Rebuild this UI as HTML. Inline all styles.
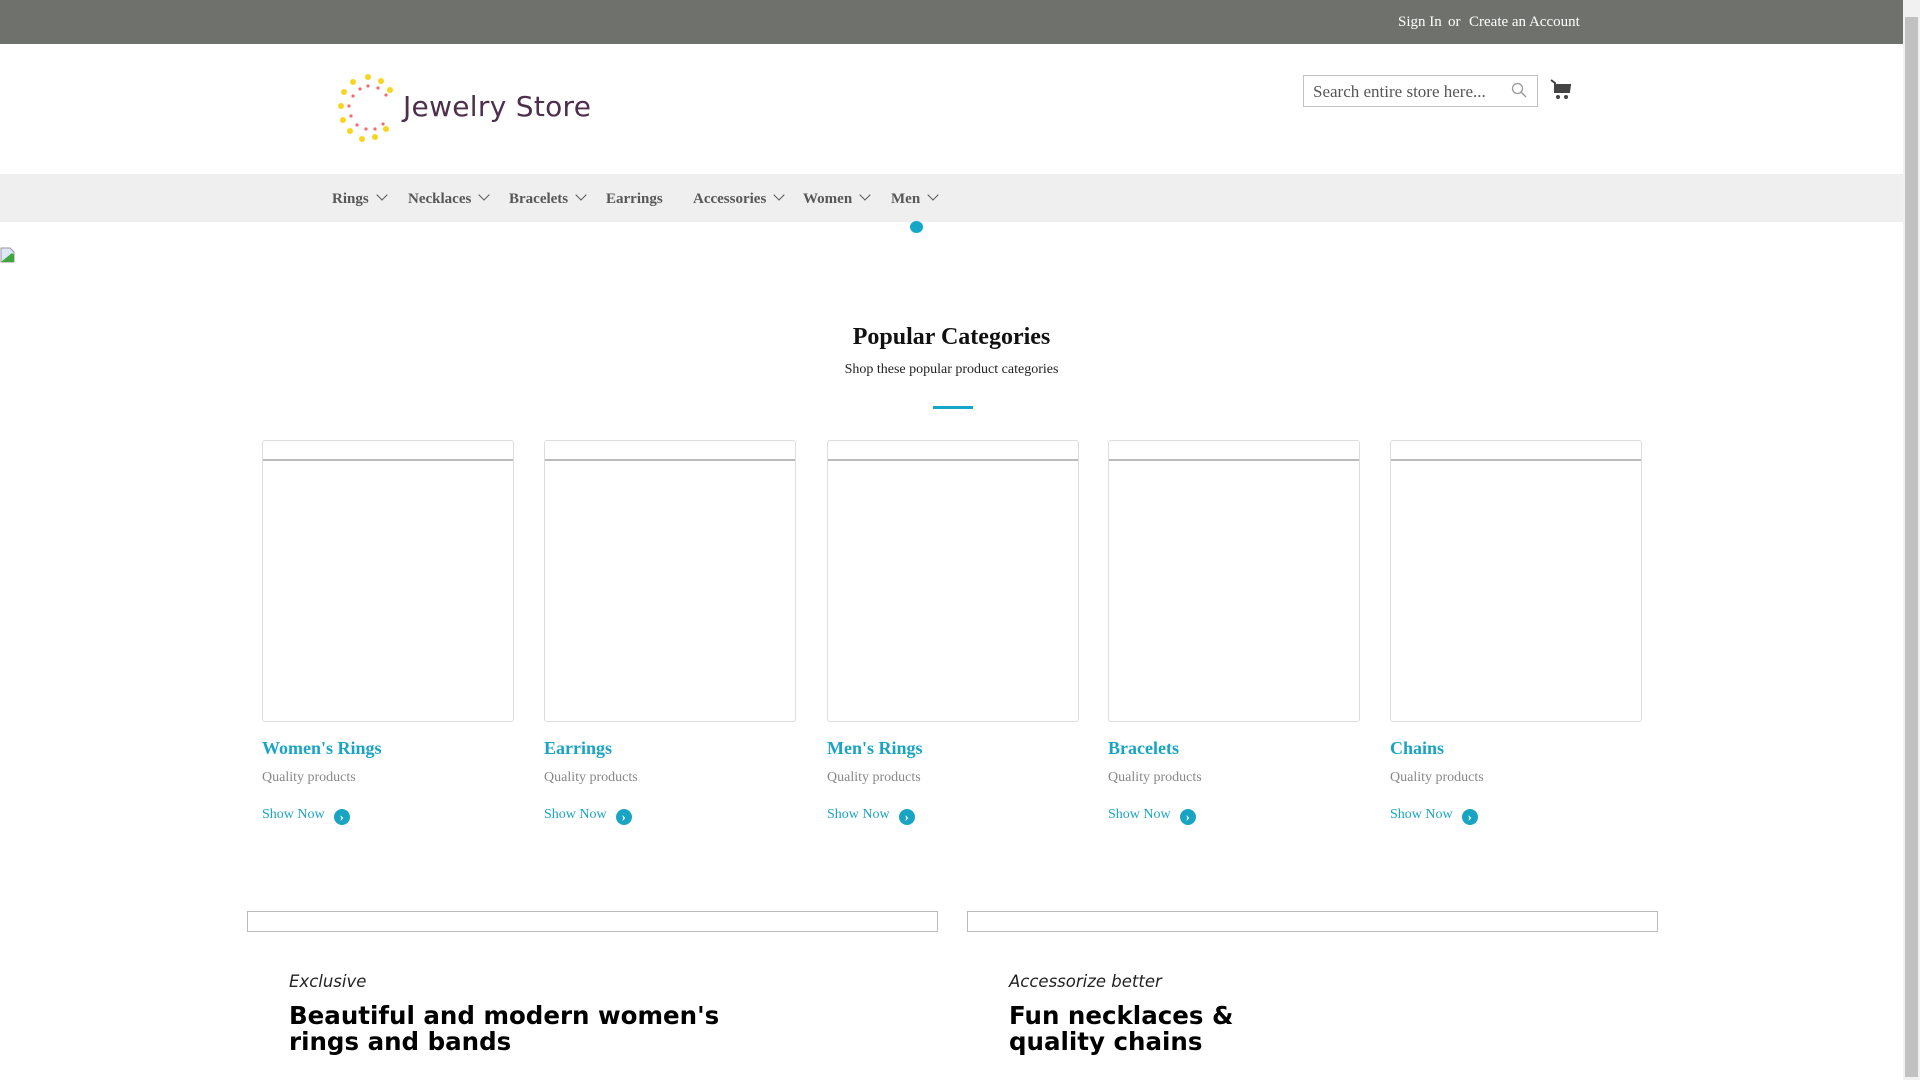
<!DOCTYPE html>
<html><head><meta charset="utf-8"><style>
*{margin:0;padding:0;box-sizing:border-box}
html,body{width:1920px;height:1080px;overflow:hidden;background:#fff;font-family:"Liberation Serif",serif}
.sb{position:absolute;right:0;top:0;width:17px;height:1080px;background:#f1f1f1}
.sb i{position:absolute;left:2px;top:17px;width:13px;height:1060px;background:#c1c1c1}
.top{position:absolute;left:0;top:0;width:1903px;height:44px;background:#6f716d;color:#fff;font-size:15px}
.abs{position:absolute}
.nav{position:absolute;left:0;top:174px;width:1903px;height:48px;background:#efefef}
.nav span{position:absolute;top:17px;font-size:15px;font-weight:bold;color:#575757}
.chev{display:inline-block;width:8px;height:8px;border-right:1.5px solid #555;border-bottom:1.5px solid #555;transform:rotate(45deg);margin-left:9px;position:relative;top:-4px}
.card{position:absolute;top:440px;width:252px;height:282px;border:1px solid #ddd;border-radius:3px}
.card .im{position:absolute;left:0;top:0;width:250px;height:20px;border-bottom:2px solid #bbb}
.ic{position:absolute;width:16px;height:16px}
.t{position:absolute;top:738px;font-size:18px;font-weight:bold;color:#1aa4c4}
.q{position:absolute;top:770px;font-size:14px;color:#888}
.s{position:absolute;top:807px;font-size:14px;color:#1aa4c4}
.s b{display:inline-block;width:16px;height:16px;border-radius:50%;background:#1aa4c4;color:#fff;font-size:13px;text-align:center;line-height:15px;margin-left:9px;vertical-align:-3px}
.ban{position:absolute;top:911px;width:691px;height:21px;border:1px solid #bbb}
.ex{position:absolute;top:972px;font-family:"DejaVu Sans",sans-serif;font-style:italic;font-size:16.5px;font-weight:200;color:#222}
.hd{position:absolute;top:1003px;font-family:"DejaVu Sans",sans-serif;font-weight:bold;font-size:24.5px;line-height:26px;color:#000}
</style></head><body>
<div class="sb"><i></i></div>
<div class="top"><span class="abs" style="left:1398px;top:14px">Sign In</span><span class="abs" style="left:1448px;top:14px">or</span><span class="abs" style="left:1469px;top:14px">Create an Account</span></div>
<svg class="abs" style="left:336px;top:73px" width="70" height="72" viewBox="0 0 70 72">
<g fill="#f7d520"><circle cx="32" cy="4" r="3"/><circle cx="17" cy="9" r="3"/><circle cx="45" cy="8" r="3"/><circle cx="54" cy="17" r="3"/><circle cx="8" cy="19" r="3"/><circle cx="5" cy="33" r="3"/><circle cx="7" cy="47" r="3"/><circle cx="14" cy="58" r="3"/><circle cx="26" cy="66" r="3"/><circle cx="39" cy="64" r="3"/><circle cx="50" cy="56" r="3"/></g>
<g fill="#ef6d6d"><circle cx="32" cy="13" r="1.6"/><circle cx="24" cy="16" r="1.6"/><circle cx="42" cy="15" r="1.6"/><circle cx="50" cy="22" r="1.6"/><circle cx="17" cy="23" r="1.6"/><circle cx="13" cy="33" r="1.6"/><circle cx="15" cy="43" r="1.6"/><circle cx="21" cy="52" r="1.6"/><circle cx="30" cy="56" r="1.6"/><circle cx="39" cy="56" r="1.6"/><circle cx="47" cy="51" r="1.6"/></g></svg>
<div class="abs" style="left:403px;top:90px;font-family:'DejaVu Sans',sans-serif;font-size:28px;color:#4e2f4c;letter-spacing:0.3px">Jewelry Store</div>
<div class="abs" style="left:1303px;top:75px;width:235px;height:32px;border:1px solid #c2c2c2;font-size:17px;color:#555;padding:6px 0 0 9px">Search entire store here...</div>
<svg class="abs" style="left:1511px;top:82px" width="16" height="17"><circle cx="6.5" cy="6.5" r="5" fill="none" stroke="#999" stroke-width="1.3"/><line x1="10" y1="10" x2="15" y2="15" stroke="#999" stroke-width="1.5"/></svg>
<svg class="abs" style="left:1550px;top:79px" width="22" height="22" viewBox="0 0 22 22"><path d="M1 1 L5 4 L5 13 L19 13 L20 6 L5 6" fill="none" stroke="#444" stroke-width="2"/><rect x="6" y="7" width="13" height="5" fill="#444"/><circle cx="8" cy="18" r="2" fill="#444"/><circle cx="16" cy="18" r="2" fill="#444"/></svg>
<div class="nav">
<span style="left:332px">Rings<i class="chev"></i></span>
<span style="left:408px">Necklaces<i class="chev"></i></span>
<span style="left:509px">Bracelets<i class="chev"></i></span>
<span style="left:606px">Earrings</span>
<span style="left:693px">Accessories<i class="chev"></i></span>
<span style="left:803px">Women<i class="chev"></i></span>
<span style="left:891px">Men<i class="chev"></i></span>
</div>
<div class="abs" style="left:910px;top:221px;width:13px;height:12px;border-radius:50%;background:#14a7c7"></div>
<svg class="ic" style="left:0;top:247px" viewBox="0 0 16 16"><path d="M1 1h9l4 4v10H1z" fill="#dbe8f7" stroke="#999"/><path d="M1 15 L12 6 L14 8 V15z" fill="#3fa53c"/></svg>
<div class="abs" style="left:0;width:1903px;top:324px;text-align:center;font-size:24px;font-weight:bold;color:#111">Popular Categories</div>
<div class="abs" style="left:0;width:1903px;top:362px;text-align:center;font-size:14px;color:#222">Shop these popular product categories</div>
<div class="abs" style="left:933px;top:406px;width:40px;height:3px;background:#14a7c7"></div>

<div class="card" style="left:262px"><div class="im"></div></div>
<div class="card" style="left:544px"><div class="im"></div></div>
<div class="card" style="left:827px"><div class="im"></div></div>
<div class="card" style="left:1108px"><div class="im"></div></div>
<div class="card" style="left:1390px"><div class="im"></div></div>

<div class="t" style="left:262px">Women's Rings</div><div class="q" style="left:262px">Quality products</div><div class="s" style="left:262px">Show Now<b>›</b></div>
<div class="t" style="left:544px">Earrings</div><div class="q" style="left:544px">Quality products</div><div class="s" style="left:544px">Show Now<b>›</b></div>
<div class="t" style="left:827px">Men's Rings</div><div class="q" style="left:827px">Quality products</div><div class="s" style="left:827px">Show Now<b>›</b></div>
<div class="t" style="left:1108px">Bracelets</div><div class="q" style="left:1108px">Quality products</div><div class="s" style="left:1108px">Show Now<b>›</b></div>
<div class="t" style="left:1390px">Chains</div><div class="q" style="left:1390px">Quality products</div><div class="s" style="left:1390px">Show Now<b>›</b></div>

<div class="ban" style="left:247px"></div>
<div class="ban" style="left:967px"></div>
<div class="ex" style="left:289px">Exclusive</div>
<div class="hd" style="left:289px">Beautiful and modern women's<br>rings and bands</div>
<div class="ex" style="left:1009px">Accessorize better</div>
<div class="hd" style="left:1009px">Fun necklaces &amp;<br>quality chains</div>
</body></html>
